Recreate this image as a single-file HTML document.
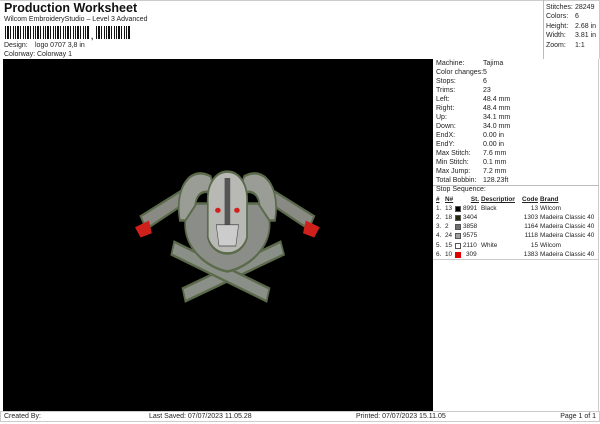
<!DOCTYPE html>
<html><head><meta charset="utf-8"><style>
*{margin:0;padding:0;box-sizing:border-box}
body{width:600px;height:424px;background:#fff;font-family:"Liberation Sans",sans-serif;font-size:7px;color:#222;position:relative;overflow:hidden}
.a{position:absolute;white-space:nowrap}
.bc{position:absolute;top:26px;height:13px;background:repeating-linear-gradient(90deg,#111 0 1px,#fff 1px 2px,#111 2px 4px,#fff 4px 5px,#111 5px 6px,#fff 6px 8px,#111 8px 9px,#fff 9px 10px)}
table{border-collapse:collapse;font-size:6.4px;table-layout:fixed}
td{padding:0;height:9.1px;white-space:nowrap;overflow:hidden}
.sq{position:absolute;width:6px;height:6px;border:1px solid #555;margin-top:1px}
</style></head><body>
<div class="a" style="left:4px;top:1px;font-size:12.5px;font-weight:bold;color:#111">Production Worksheet</div>
<div class="a" style="left:4px;top:16px">Wilcom EmbroideryStudio – Level 3 Advanced</div>
<div class="bc" style="left:5px;width:85px"></div>
<div class="a" style="left:91px;top:32px;font-weight:bold;font-size:8px">,</div>
<div class="bc" style="left:96px;width:34px"></div>
<div class="a" style="left:4px;top:42px">Design:</div><div class="a" style="left:35px;top:42px">logo 0707 3,8 in</div>
<div class="a" style="left:4px;top:51px">Colorway:</div><div class="a" style="left:37px;top:51px">Colorway 1</div>
<div style="position:absolute;left:0;top:0;width:600px;height:59px;border-top:1px solid #ccc;border-right:1px solid #ccc"></div>
<div style="position:absolute;left:543px;top:0;width:56px;height:59px;border-left:1px solid #bbb"></div>
<div class="a" style="left:546px;top:3px;line-height:9.4px">Stitches:<br>Colors:<br>Height:<br>Width:<br>Zoom:</div>
<div class="a" style="left:575px;top:3px;line-height:9.4px">28249<br>6<br>2.68 in<br>3.81 in<br>1:1</div>
<div style="position:absolute;left:3px;top:59px;width:430px;height:352px;background:#000">
<svg width="430" height="352" viewBox="0 0 430 352">
<g transform="translate(104,17) scale(0.56,0.85)">
<g stroke="#5a6a4a" stroke-width="3">
<path d="M135 250 L310 195 L316 210 L140 265Z" fill="#8a8f88"/>
<path d="M290 250 L120 195 L115 210 L285 265Z" fill="#8a8f88"/>
<path d="M60 165 L145 130 L150 145 L70 180Z" fill="#8a8a85"/>
<path d="M370 165 L285 130 L280 145 L360 180Z" fill="#8a8a85"/>
<path d="M130 170 C120 130 150 105 185 118 L195 140 C170 130 150 140 160 170Z" fill="#9a9c96"/>
<path d="M300 170 C310 130 280 105 245 118 L235 140 C260 130 280 140 270 170Z" fill="#9a9c96"/>
<path d="M140 170 C135 200 175 225 215 230 C255 225 295 200 290 170 L270 150 L160 150Z" fill="#8b8d88"/>
<path d="M180 150 C175 100 255 100 250 150 L250 190 C240 215 190 215 180 190Z" fill="#b8b9b4"/>
</g>
<path d="M50 178 L75 170 L80 185 L60 190Z" fill="#d0201c"/>
<path d="M380 178 L355 170 L350 185 L370 190Z" fill="#d0201c"/>
<rect x="210" y="120" width="10" height="60" fill="#555"/>
<ellipse cx="198" cy="158" rx="5" ry="3" fill="#d0201c"/>
<ellipse cx="232" cy="158" rx="5" ry="3" fill="#d0201c"/>
<path d="M195 175 L235 175 L230 200 L200 200Z" fill="#ccc" stroke="#444"/>
</g>
</svg></div>
<div style="position:absolute;left:433px;top:59px;width:166px;height:352px;border-right:1px solid #ccc"></div>
<div class="a" style="left:436px;top:58.5px;line-height:9.05px">Machine:<br>Color changes:<br>Stops:<br>Trims:<br>Left:<br>Right:<br>Up:<br>Down:<br>EndX:<br>EndY:<br>Max Stitch:<br>Min Stitch:<br>Max Jump:<br>Total Bobbin:</div>
<div class="a" style="left:483px;top:58.5px;line-height:9.05px">Tajima<br>5<br>6<br>23<br>48.4 mm<br>48.4 mm<br>34.1 mm<br>34.0 mm<br>0.00 in<br>0.00 in<br>7.6 mm<br>0.1 mm<br>7.2 mm<br>128.23ft</div>
<div style="position:absolute;left:433px;top:185px;width:166px;border-top:1px solid #bbb"></div>
<div class="a" style="left:436px;top:186px">Stop Sequence:</div>
<table style="position:absolute;left:436px;top:195px;width:162px">
<colgroup><col style="width:9px"><col style="width:10px"><col style="width:24px"><col style="width:36px"><col style="width:23px"><col style="width:60px"></colgroup>
<tr style="font-weight:bold;text-decoration:underline"><td>#</td><td>N#</td><td style="text-align:right">St.</td><td style="padding-left:2px">Description</td><td style="text-align:right">Code</td><td style="padding-left:2px">Brand</td></tr>
<tr><td>1.</td><td>13</td><td><span class="sq" style="background:#000"></span><span style="margin-left:8px">8991</span></td><td style="padding-left:2px">Black</td><td style="text-align:right">13</td><td style="padding-left:2px">Wilcom</td></tr>
<tr><td>2.</td><td>18</td><td><span class="sq" style="background:#262b10"></span><span style="margin-left:8px">3404</span></td><td></td><td style="text-align:right">1303</td><td style="padding-left:2px">Madeira Classic 40</td></tr>
<tr><td>3.</td><td>2</td><td><span class="sq" style="background:#707070"></span><span style="margin-left:8px">3858</span></td><td></td><td style="text-align:right">1164</td><td style="padding-left:2px">Madeira Classic 40</td></tr>
<tr><td>4.</td><td>24</td><td><span class="sq" style="background:#a0a0a0"></span><span style="margin-left:8px">9575</span></td><td></td><td style="text-align:right">1118</td><td style="padding-left:2px">Madeira Classic 40</td></tr>
<tr><td>5.</td><td>15</td><td><span class="sq" style="background:#fff"></span><span style="margin-left:8px">2110</span></td><td style="padding-left:2px">White</td><td style="text-align:right">15</td><td style="padding-left:2px">Wilcom</td></tr>
<tr><td>6.</td><td>10</td><td><span class="sq" style="background:#e00000;border-color:#e00000"></span><span style="margin-left:11px">309</span></td><td></td><td style="text-align:right">1383</td><td style="padding-left:2px">Madeira Classic 40</td></tr>
</table>
<div style="position:absolute;left:433px;top:259px;width:166px;border-top:1px solid #ccc"></div>
<div style="position:absolute;left:0;top:411px;width:600px;height:11px;border:1px solid #ccc"></div>
<div class="a" style="left:4px;top:412.5px">Created By:</div>
<div class="a" style="left:149px;top:412.5px">Last Saved: 07/07/2023 11.05.28</div>
<div class="a" style="left:356px;top:412.5px">Printed: 07/07/2023 15.11.05</div>
<div class="a" style="right:4px;top:412.5px">Page 1 of 1</div>
</body></html>
